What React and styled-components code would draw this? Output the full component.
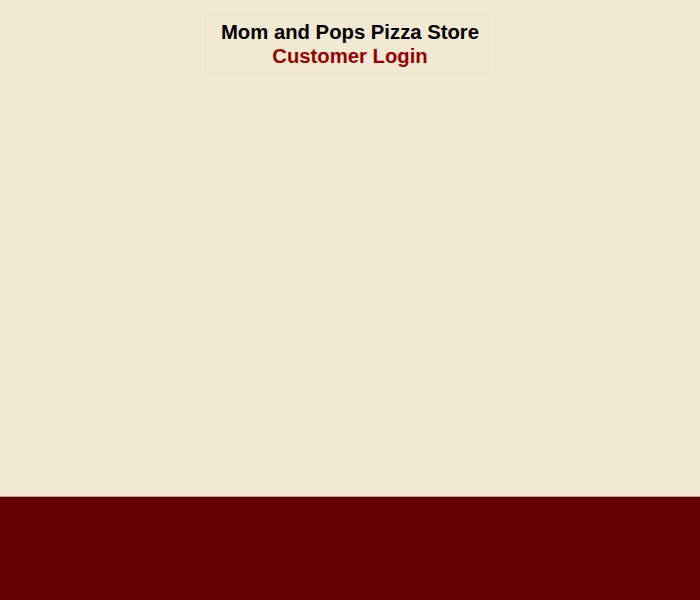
import React from "react";
import styled, { createGlobalStyle } from "styled-components";

const Global = createGlobalStyle`
  html, body { margin: 0; padding: 0; }
  body {
    background: #f2e9d3;
    font-family: "Liberation Sans", Arial, sans-serif;
  }
`;

const Page = styled.div`
  display: flex;
  flex-direction: column;
  min-height: 600px;
`;

const Main = styled.main`
  flex: 1;
  display: flex;
  flex-direction: column;
  align-items: center;
  padding-top: 14px;
`;

const TitleBox = styled.header`
  width: 282px;
  height: 53px;
  margin-left: -6px;
  border: 1px solid #eee4ca;
  display: flex;
  flex-direction: column;
  align-items: center;
  padding-top: 5px;
  box-sizing: content-box;
`;

const Heading = styled.h1`
  margin: 0;
  font-size: 20.3px;
  line-height: 24px;
  font-weight: bold;
  color: ${(p) => p.$color};
  white-space: nowrap;
  position: relative;
  left: 3px;
`;

const Footer = styled.footer`
  height: 104px;
  background: #660000;
  border-top: 1px solid #b9a48c;
  box-sizing: border-box;
`;

export default function App() {
  return (
    <>
      <Global />
      <Page>
        <Main>
          <TitleBox>
            <Heading $color="#000000">Mom and Pops Pizza Store</Heading>
            <Heading $color="#990000">Customer Login</Heading>
          </TitleBox>
        </Main>
        <Footer />
      </Page>
    </>
  );
}
